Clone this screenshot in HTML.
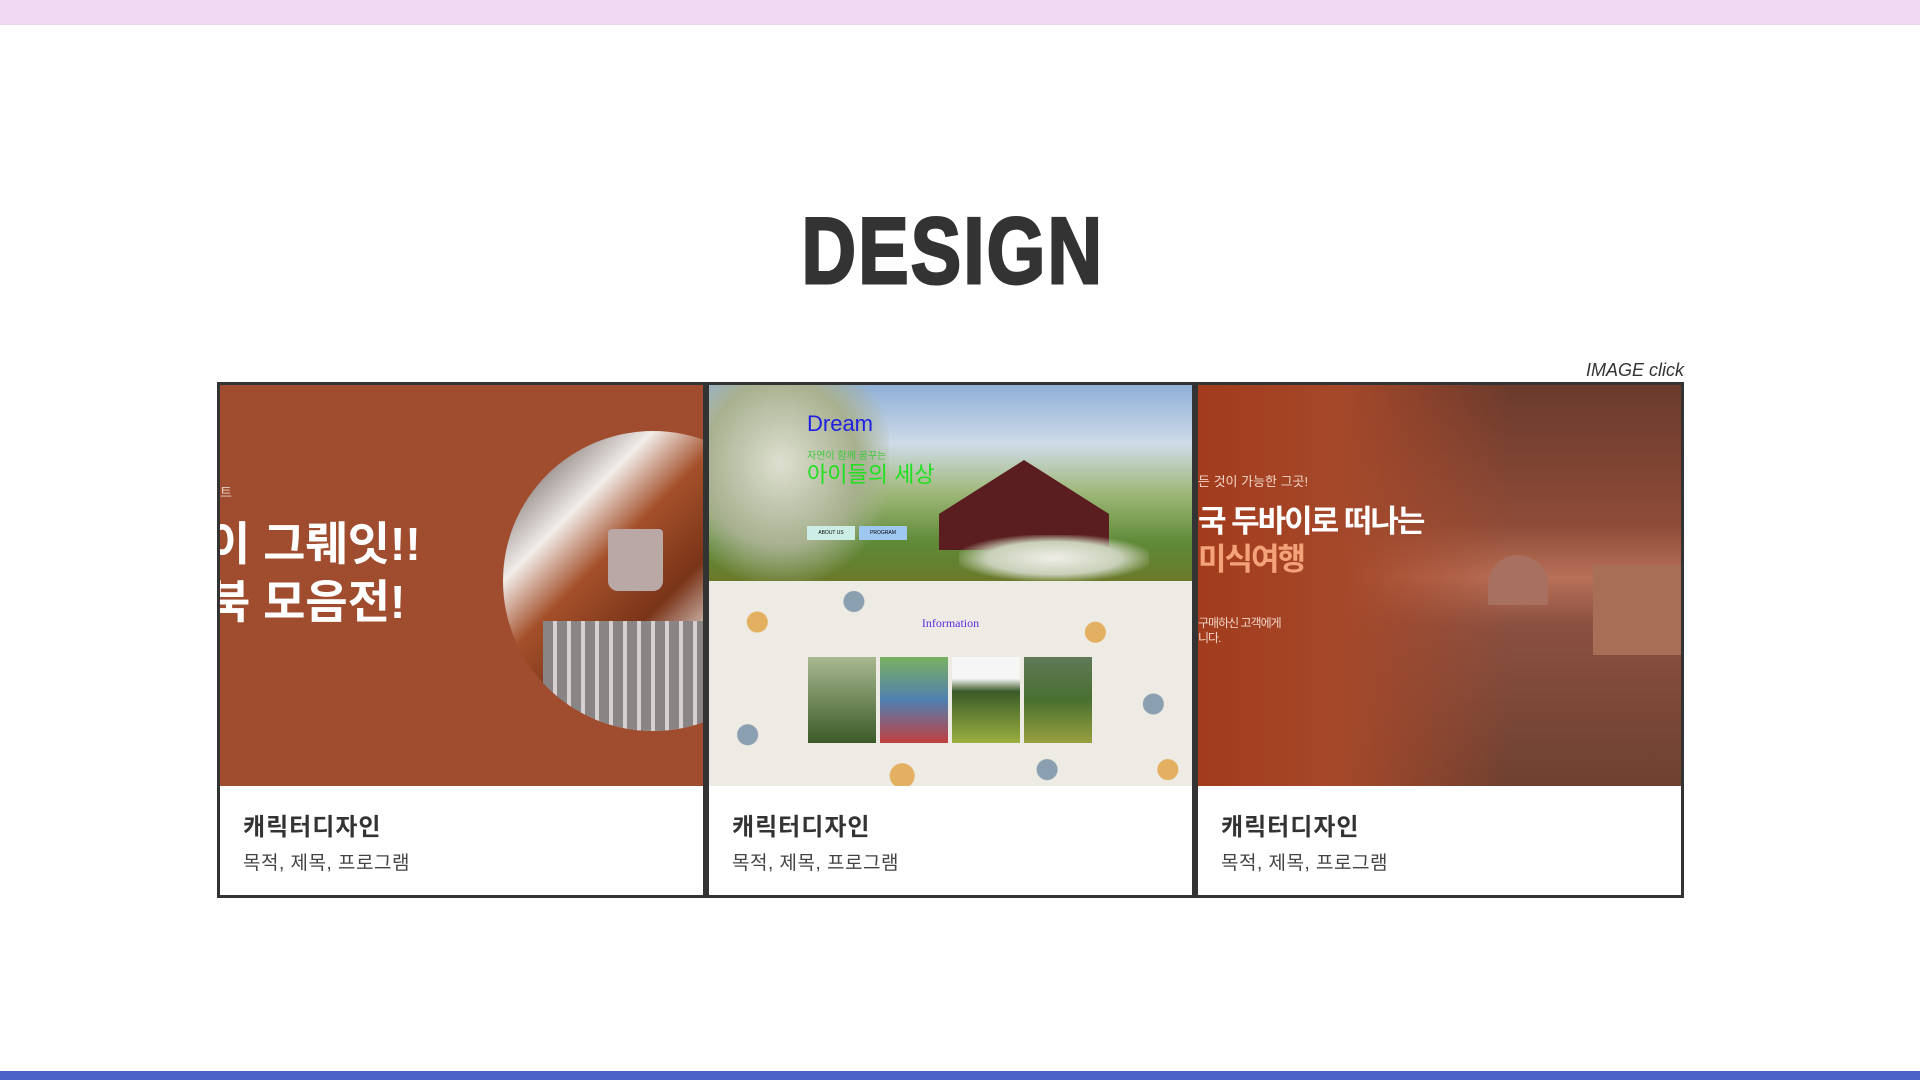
<!DOCTYPE html>
<html><head><meta charset="utf-8"><style>
*{margin:0;padding:0;box-sizing:border-box}
body{width:1920px;height:1080px;background:#fff;position:relative;overflow:hidden;font-family:"Liberation Sans","Noto Sans CJK KR",sans-serif}
.top{position:absolute;left:0;top:0;width:1920px;height:25px;background:#f1d9f3}
.bot{position:absolute;left:0;top:1071px;width:1920px;height:9px;background:#4d62c8}
h1{position:absolute;left:-7px;width:1920px;top:198px;text-align:center;font-size:94px;line-height:106px;font-weight:bold;color:#333;transform:scaleX(0.8);letter-spacing:3px;-webkit-text-stroke:3px #333}
.click{position:absolute;right:236px;top:360px;font-size:18px;font-style:italic;color:#333}
.card{position:absolute;top:382px;width:489px;height:516px;border:3px solid #333;background:#fff;overflow:hidden}
.img{position:absolute;left:0;top:0;width:483px;height:401px;overflow:hidden}
.t{position:absolute;left:23px;top:422px;font-size:24px;font-weight:bold;color:#333;letter-spacing:1px}
.s{position:absolute;left:23px;top:463px;font-size:19px;color:#444;letter-spacing:0.5px}
.abs{position:absolute;white-space:nowrap}
</style></head><body>
<div class="top"></div>
<h1>DESIGN</h1>
<div class="click">IMAGE click</div>

<div class="card" style="left:217px">
 <div class="img" style="background:#a04c2f">
  <div class="abs" style="left:0;top:97px;font-size:13px;color:#e9cfc4">트</div>
  <div class="abs" style="left:-12px;top:130px;font-size:46px;line-height:58px;color:#fff;font-weight:bold">이 그뤠잇!!<br>북 모음전!</div>
  <div class="abs" style="left:283px;top:46px;width:300px;height:300px;border-radius:50%;background:linear-gradient(135deg,#3a2a28 0%,#f1ede9 25%,#a4502a 38%,#7a3418 55%,#e6e0dc 70%,#9a9090 85%,#d8d2d0 100%);overflow:hidden">
   <div class="abs" style="left:105px;top:98px;width:55px;height:62px;background:#b9a8a6;border-radius:4px 4px 10px 10px"></div>
   <div class="abs" style="left:40px;top:190px;width:160px;height:110px;background:repeating-linear-gradient(90deg,#8a8585 0 10px,#d6d0d0 10px 14px)"></div>
  </div>
 </div>
 <div class="t">캐릭터디자인</div><div class="s">목적, 제목, 프로그램</div>
</div>

<div class="card" style="left:706px">
 <div class="img" style="background:#eeebe4">
  <div class="abs" style="left:0;top:0;width:483px;height:196px;background:linear-gradient(180deg,#8fb0d8 0%,#cfdbe8 30%,#9fb878 55%,#5f8a38 80%,#6a7a2a 100%)">
   <div class="abs" style="left:0;top:0;width:180px;height:196px;background:radial-gradient(ellipse at 40% 40%,#dde0d0 0%,#a7b08f 50%,rgba(90,110,60,0) 75%)"></div>
   <div class="abs" style="left:230px;top:75px;width:170px;height:90px;background:#5a1e20;clip-path:polygon(0 60%,50% 0,100% 60%,100% 100%,0 100%)"></div>
   <div class="abs" style="left:250px;top:150px;width:190px;height:46px;background:radial-gradient(ellipse,#f0eee8 0%,#c8d0b8 50%,rgba(100,130,60,0) 75%)"></div>
   <div class="abs" style="left:98px;top:26px;font-size:22px;color:#2020e0">Dream</div>
   <div class="abs" style="left:98px;top:62px;font-size:10px;color:#3ec83e">자연이 함께 꿈꾸는</div>
   <div class="abs" style="left:98px;top:72px;font-size:22px;color:#20e020">아이들의 세상</div>
   <div class="abs" style="left:98px;top:141px;width:48px;height:14px;background:#cdeee6;font-size:5px;text-align:center;line-height:14px">ABOUT US</div>
   <div class="abs" style="left:150px;top:141px;width:48px;height:14px;background:#9ec8f0;font-size:5px;text-align:center;line-height:14px">PROGRAM</div>
  </div>
  <div class="abs" style="left:0;top:196px;width:483px;height:205px;background:radial-gradient(circle at 10% 20%,#e2b060 0 10px,transparent 11px),radial-gradient(circle at 30% 10%,#8aa0b0 0 10px,transparent 11px),radial-gradient(circle at 80% 25%,#e2b060 0 10px,transparent 11px),radial-gradient(circle at 92% 60%,#8aa0b0 0 10px,transparent 11px),radial-gradient(circle at 8% 75%,#8aa0b0 0 10px,transparent 11px),radial-gradient(circle at 40% 95%,#e2b060 0 12px,transparent 13px),radial-gradient(circle at 70% 92%,#8aa0b0 0 10px,transparent 11px),radial-gradient(circle at 95% 92%,#e2b060 0 10px,transparent 11px),#eeebe4">
   <div class="abs" style="left:0;width:483px;top:35px;text-align:center;font-family:'Liberation Serif',serif;font-size:12px;color:#5a2ce0">Information</div>
   <div class="abs" style="left:99px;top:76px;width:68px;height:86px;background:linear-gradient(#a8b890,#3c5a28)"></div>
   <div class="abs" style="left:171px;top:76px;width:68px;height:86px;background:linear-gradient(#7ab060,#5080b0,#c04040)"></div>
   <div class="abs" style="left:243px;top:76px;width:68px;height:86px;background:linear-gradient(#f6f6f6 0 25%,#3a5a28 40%,#9ab040)"></div>
   <div class="abs" style="left:315px;top:76px;width:68px;height:86px;background:linear-gradient(#607858,#4a7030,#98a040)"></div>
  </div>
 </div>
 <div class="t">캐릭터디자인</div><div class="s">목적, 제목, 프로그램</div>
</div>

<div class="card" style="left:1195px">
 <div class="img" style="background:linear-gradient(90deg,#a23c1c 0%,#a5482a 30%,rgba(150,70,40,0) 65%),linear-gradient(180deg,#6a3a2c 0%,#8e4c38 35%,#b87058 48%,#8a5040 60%,#6e4030 100%)">
   <div class="abs" style="left:290px;top:170px;width:60px;height:50px;background:#a87060;border-radius:30px 30px 0 0"></div>
   <div class="abs" style="left:395px;top:180px;width:88px;height:90px;background:#a86e56"></div>
   <div class="abs" style="left:0;top:86px;font-size:13px;color:#f2d5c8">든 것이 가능한 그곳!</div>
   <div class="abs" style="left:0;top:118px;font-size:31px;line-height:38px;font-weight:bold;letter-spacing:-2px;color:#fff">국 두바이로 떠나는<br><span style="color:#f4a27a">미식여행</span></div>
   <div class="abs" style="left:0;top:231px;font-size:12px;line-height:15px;color:#f2d5c8;letter-spacing:-1px">구매하신 고객에게<br>니다.</div>
 </div>
 <div class="t">캐릭터디자인</div><div class="s">목적, 제목, 프로그램</div>
</div>

<div class="bot"></div>
</body></html>
